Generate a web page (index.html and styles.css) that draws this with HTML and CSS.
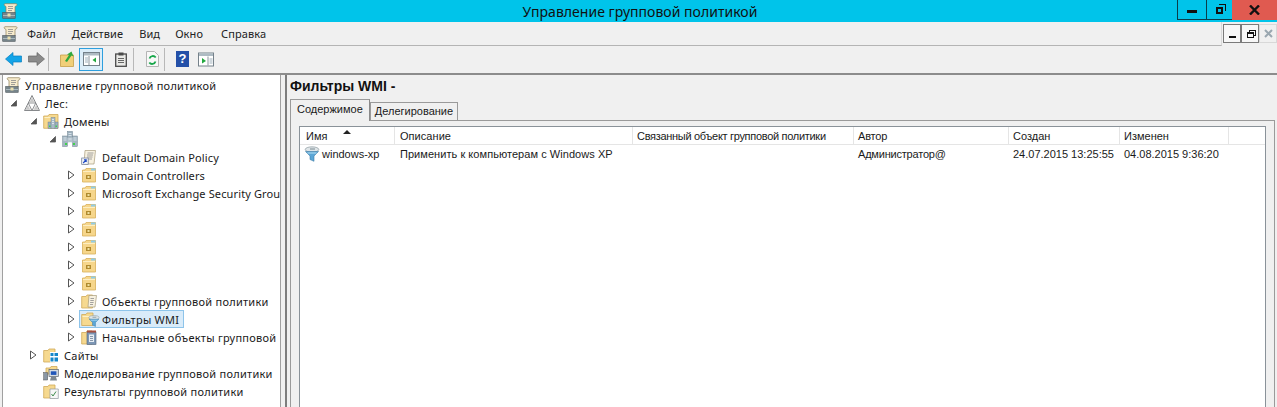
FILE: index.html
```html
<!DOCTYPE html>
<html lang="ru">
<head>
<meta charset="utf-8">
<title>Управление групповой политикой</title>
<link rel="stylesheet" href="styles.css">
</head>
<body>
<svg class="defs" width="0" height="0">
  <defs>
    <symbol id="scroll" viewBox="0 0 16 16">
      <path d="M3 .7h11c1 0 1.500 1.300.5 2l-1.500.8V9c0 1-1 1.500-2 1.500H4V3.500L2.500 2.500C2 1.700 2.300.7 3 .7z" fill="#f6ebcd" stroke="#8f8058" stroke-width=".7"/>
      <path d="M6 3.500h5M6 5.500h5M6 7.500h4" stroke="#8a8a8a" stroke-width=".8"/>
      <rect x=".7" y="9.500" width="12.500" height="5.800" fill="#76848a" stroke="#4b5459" stroke-width=".6"/>
      <rect x="1" y="12" width="12" height="1" fill="#aab8be"/>
      <rect x="5.500" y="10.500" width="3" height="3" fill="#eadfae"/>
    </symbol>
    <symbol id="folder" viewBox="0 0 16 16">
      <path d="M.7 3.500V14.500H12V2H6L5 3.500z" fill="#f6d98f" stroke="#d1aa58" stroke-width=".8"/>
      <path d="M1.500 5h10v1h-10z" fill="#fdf0c6"/>
    </symbol>
    <symbol id="ou" viewBox="0 0 16 16">
      <path d="M1.500 3V15H14.500V1.500H5L4 3z" fill="#f6d68b" stroke="#d8b05a" stroke-width=".8"/>
      <path d="M2 4h12v1H2z" fill="#fdeec2"/>
      <rect x="10" y="1.500" width="4.500" height="2" fill="#8fcdea"/>
      <rect x="5" y="8" width="5" height="4" fill="#b08a2e"/>
      <rect x="6.500" y="9" width="2" height="2" fill="#efe0a0"/>
    </symbol>
    <symbol id="servers" viewBox="0 0 16 16">
      <rect x="5.500" y=".5" width="5" height="6" fill="#9cb0bd" stroke="#718490" stroke-width=".5"/>
      <rect x=".7" y="5" width="4.800" height="10.500" fill="#a4b6c2" stroke="#718490" stroke-width=".5"/>
      <rect x="10.500" y="5" width="4.800" height="10.500" fill="#a4b6c2" stroke="#718490" stroke-width=".5"/>
      <rect x="5.500" y="6.500" width="5" height="5" fill="#b6c5cf"/>
      <rect x="6.500" y="11.500" width="3" height="4" fill="#fff"/>
      <path d="M1.500 7h3M1.500 9h3M11.500 7h3M11.500 9h3M6.500 2.500h3M6.500 4.500h3M6.500 8h3" stroke="#e6eef2" stroke-width=".8"/>
      <rect x="3" y="12" width="2" height="2" fill="#3ed24b"/>
      <rect x="11" y="12" width="2" height="2" fill="#3ed24b"/>
    </symbol>
    <symbol id="forest" viewBox="0 0 16 16">
      <path d="M8 .5L15.500 15.500H.5z" fill="#eeeeee" stroke="#7b7d80" stroke-width=".9"/>
      <path d="M4.300 8h7.400L8 15.500z" fill="#fff" stroke="#7b7d80" stroke-width=".8"/>
      <path d="M8 2.500L5.500 7.500h5zM3.500 10L1.800 14.800h4.500zM12.500 10l1.700 4.800H9.700z" fill="#c9c9c9"/>
    </symbol>
    <symbol id="domains" viewBox="0 0 16 16">
      <path d="M.7 3V15.300H15V1.500H6L5 3z" fill="#f6d98f" stroke="#d1aa58" stroke-width=".8"/>
      <path d="M1.500 4h7v1h-7z" fill="#fdf0c6"/>
      <rect x="5" y="9" width="3.500" height="6.500" fill="#9cb0bd" stroke="#667a85" stroke-width=".4"/>
      <rect x="11.500" y="9" width="3.500" height="6.500" fill="#9cb0bd" stroke="#667a85" stroke-width=".4"/>
      <rect x="8" y="4.500" width="4" height="11" fill="#a9bbc6" stroke="#667a85" stroke-width=".4"/>
      <path d="M9 6.500h2M9 8.500h2M9 10.500h2" stroke="#e8f0f3" stroke-width=".8"/>
      <rect x="6" y="12.500" width="1.500" height="1.500" fill="#3ed24b"/>
      <rect x="12.500" y="12.500" width="1.500" height="1.500" fill="#3ed24b"/>
    </symbol>
    <symbol id="gpo" viewBox="0 0 16 16">
      <path d="M4 1.500h10.500L13 15H3z" fill="#f7f1e0" stroke="#a79b7b" stroke-width=".7"/>
      <path d="M6.500 4h6M6 6h6M6 8h5.500M6 10h5" stroke="#8d8d8d" stroke-width=".8"/>
      <rect x=".7" y="9" width="6.500" height="6.500" fill="#eef1f6" stroke="#707a90" stroke-width=".7"/>
      <path d="M2.200 14L5 11M3 10.800H5.200V13" stroke="#1f49c4" stroke-width="1.100" fill="none"/>
    </symbol>
    <symbol id="gpofolder" viewBox="0 0 16 16">
      <path d="M.7 3.500V15H11.500V2H6L5 3.500z" fill="#f6d98f" stroke="#d1aa58" stroke-width=".8"/>
      <path d="M8 2.500h7.500l-1.500 11.500H7z" fill="#f7f1e0" stroke="#a79b7b" stroke-width=".7"/>
      <path d="M9.500 5.500h3.500M9.300 7.500h3.500M9.100 9.500h3.500M9 11.500h3" stroke="#8d8d8d" stroke-width=".8"/>
    </symbol>
    <symbol id="funnel" viewBox="0 0 16 16">
      <ellipse cx="8" cy="3.500" rx="6.800" ry="2.700" fill="#dfe5e8" stroke="#7a8b92" stroke-width=".6"/>
      <path d="M6 3h5" stroke="#7a8b92"/>
      <path d="M1.500 5.500h13L10 10v5.300L6 13.500V10z" fill="#5ba6d6" stroke="#3f7ea8" stroke-width=".6"/>
      <path d="M3.500 7h9" stroke="#b4def2"/>
    </symbol>
    <symbol id="starter" viewBox="0 0 16 16">
      <path d="M.7 3.500V15H11V2H6L5 3.500z" fill="#f6d98f" stroke="#d1aa58" stroke-width=".8"/>
      <rect x="6" y="3" width="9" height="12.500" fill="#7d97b6" stroke="#4c5f78" stroke-width=".6"/>
      <rect x="6" y="1.500" width="9" height="2" fill="#a85040"/>
      <rect x="8" y="5.500" width="5" height="7.500" fill="#e7edf3"/>
      <path d="M9 7.500h3M9 9.500h3M9 11.500h3" stroke="#5d7088" stroke-width=".7"/>
    </symbol>
    <symbol id="sites" viewBox="0 0 16 16">
      <path d="M.7 3.500V15H12V2H6L5 3.500z" fill="#f6d98f" stroke="#d1aa58" stroke-width=".8"/>
      <rect x="7" y="5" width="8.500" height="10.500" fill="#fff"/>
      <path d="M7.500 6h3v3h-3zM11.500 6h3.500v3h-3.500zM7.500 10.500h3v4h-3zM11.500 10.500h3.500v4h-3.500z" fill="#1586c9"/>
    </symbol>
    <symbol id="model" viewBox="0 0 16 16">
      <path d="M3 3V9H14V1.500H8L7 3z" fill="#f6d98f" stroke="#d1aa58" stroke-width=".8"/>
      <rect x=".7" y="7.500" width="4" height="7.500" fill="#8b98a6" stroke="#555" stroke-width=".5"/>
      <rect x="6" y="4.500" width="9.300" height="7" fill="#d7dde3" stroke="#56606a" stroke-width=".7"/>
      <rect x="7.800" y="6.300" width="5.600" height="3.600" fill="#2156b8"/>
      <path d="M7 15.500h7l-1-3.500H8z" fill="#7d8790"/>
    </symbol>
    <symbol id="results" viewBox="0 0 16 16">
      <path d="M.7 3.500V15H12V2H6L5 3.500z" fill="#f6d98f" stroke="#d1aa58" stroke-width=".8"/>
      <path d="M7 6h8.300v9.500H7z" fill="#f7f7f7" stroke="#8f9aa2" stroke-width=".7"/>
      <path d="M8.500 11l1.500 2 3-4.500" stroke="#3e8c4d" stroke-width="1" fill="none"/>
    </symbol>
    <symbol id="open" viewBox="0 0 9 10"><path d="M1.500 1v8l5.500-4z" fill="#fff" stroke="#555" stroke-width="1"/></symbol>
    <symbol id="expanded" viewBox="0 0 9 10"><path d="M7.500 2.500v5.500H2z" fill="#555" stroke="#555" stroke-width=".8"/></symbol>
  </defs>
</svg>

<div class="app">
  <header class="titlebar">
    <svg class="ico title-ico"><use href="#scroll"/></svg>
    <h1 class="title">Управление групповой политикой</h1>
    <div class="winbtns">
      <span class="winbtn min"><i class="dash"></i></span>
      <span class="winbtn max"><i class="restore"></i></span>
      <span class="winbtn close">
        <svg width="11" height="10" viewBox="0 0 11 10"><path d="M1 .5L10 9.500M10 .5L1 9.500" stroke="#111" stroke-width="2.400"/></svg>
      </span>
    </div>
  </header>

  <nav class="menubar">
    <div class="menuleft">
      <svg class="ico menu-ico"><use href="#scroll"/></svg>
      <span class="menuitem m1">Файл</span>
      <span class="menuitem m2">Действие</span>
      <span class="menuitem m3">Вид</span>
      <span class="menuitem m4">Окно</span>
      <span class="menuitem m5">Справка</span>
    </div>
    <div class="mdibtns">
      <span class="mdibtn"><i class="mdi-dash"></i></span>
      <span class="mdibtn"><i class="mdi-restore"></i></span>
      <span class="mdibtn off">
        <svg width="9" height="9" viewBox="0 0 9 9"><path d="M1 1l7 7M8 1L1 8" stroke="#9aa7b0" stroke-width="2"/></svg>
      </span>
    </div>
  </nav>

  <div class="toolbar">
    <svg class="tool arrow" width="17" height="14" viewBox="0 0 17 14"><path d="M8 .5V4h8.500v6H8v3.500L.5 7z" fill="#13a4e8" stroke="#0a7fbe" stroke-width=".7"/></svg>
    <svg class="tool arrow a2" width="17" height="14" viewBox="0 0 17 14"><path d="M9 .5V4H.5v6H9v3.500L16.500 7z" fill="#8b8b8b" stroke="#666" stroke-width=".7"/></svg>
    <i class="sep s1"></i>
    <svg class="tool up" width="15" height="16" viewBox="0 0 15 16"><path d="M.5 4V15.500H13.500V4z" fill="#f1cf78" stroke="#c79f48" stroke-width=".8"/><path d="M5 10L9 4 7 3.500 11.500.5l2 5-2-1L7 11z" fill="#2fa83c"/></svg>
    <span class="activebtn"><svg width="17" height="16" viewBox="0 0 17 16"><rect x=".5" y="1.500" width="16" height="13" fill="#fff" stroke="#75818a"/><rect x="1" y="2" width="15" height="2.500" fill="#aebbc3"/><path d="M6 5v9" stroke="#8a949c"/><path d="M2 7h3M2 9h3M2 11h3" stroke="#9fb0bb"/><path d="M13 6.500v5L9.500 9z" fill="#22a83e"/></svg></span>
    <svg class="tool clip" width="12" height="15" viewBox="0 0 12 15"><rect x=".7" y="2" width="10.600" height="12.300" fill="#e9e9e6" stroke="#4a4a4a" stroke-width="1.300"/><rect x="3.500" y=".5" width="5" height="3" fill="#4a4a4a"/><path d="M3 6.500h6M3 8.500h6M3 10.500h6" stroke="#666"/></svg>
    <i class="sep s2"></i>
    <svg class="tool refresh" width="13" height="16" viewBox="0 0 13 16"><path d="M.5.5h8l4 4v11H.5z" fill="#f8f8f8" stroke="#b4b4b4"/><path d="M3.500 7.500a3.500 3.500 0 0 1 6.200-1M9.500 10.500a3.500 3.500 0 0 1-6.200 1" stroke="#18a64a" stroke-width="1.800" fill="none"/></svg>
    <i class="sep s3"></i>
    <span class="help">?</span>
    <svg class="tool pane2" width="16" height="15" viewBox="0 0 16 15"><rect x=".5" y="1" width="15" height="13" fill="#fff" stroke="#75818a"/><rect x="1" y="1.500" width="14" height="2.500" fill="#aebbc3"/><path d="M10 4.500v9" stroke="#8a949c"/><path d="M11.500 7h3M11.500 9h3M11.500 11h3" stroke="#9fb0bb"/><path d="M4 6v5.500L8 9z" fill="#22a83e"/></svg>
  </div>

  <main class="panes">
    <aside class="tree">
      <div class="row l0"><svg class="ico"><use href="#scroll"/></svg><span class="lbl">Управление групповой политикой</span></div>
      <div class="row l1"><svg class="tw"><use href="#expanded"/></svg><svg class="ico"><use href="#forest"/></svg><span class="lbl">Лес:</span></div>
      <div class="row l2"><svg class="tw"><use href="#expanded"/></svg><svg class="ico"><use href="#domains"/></svg><span class="lbl">Домены</span></div>
      <div class="row l3"><svg class="tw"><use href="#expanded"/></svg><svg class="ico"><use href="#servers"/></svg></div>
      <div class="row l4"><span class="tw"></span><svg class="ico"><use href="#gpo"/></svg><span class="lbl lat">Default Domain Policy</span></div>
      <div class="row l4"><svg class="tw"><use href="#open"/></svg><svg class="ico"><use href="#ou"/></svg><span class="lbl lat">Domain Controllers</span></div>
      <div class="row l4"><svg class="tw"><use href="#open"/></svg><svg class="ico"><use href="#ou"/></svg><span class="lbl lat">Microsoft Exchange Security Grou</span></div>
      <div class="row l4"><svg class="tw"><use href="#open"/></svg><svg class="ico"><use href="#ou"/></svg></div>
      <div class="row l4"><svg class="tw"><use href="#open"/></svg><svg class="ico"><use href="#ou"/></svg></div>
      <div class="row l4"><svg class="tw"><use href="#open"/></svg><svg class="ico"><use href="#ou"/></svg></div>
      <div class="row l4"><svg class="tw"><use href="#open"/></svg><svg class="ico"><use href="#ou"/></svg></div>
      <div class="row l4"><svg class="tw"><use href="#open"/></svg><svg class="ico"><use href="#ou"/></svg></div>
      <div class="row l4"><svg class="tw"><use href="#open"/></svg><svg class="ico"><use href="#gpofolder"/></svg><span class="lbl">Объекты групповой политики</span></div>
      <div class="row l4"><svg class="tw"><use href="#open"/></svg><span class="selbox"><svg class="ico"><use href="#folder"/></svg><svg class="ico funnel-over"><use href="#funnel"/></svg><span class="lbl">Фильтры WMI</span></span></div>
      <div class="row l4"><svg class="tw"><use href="#open"/></svg><svg class="ico"><use href="#starter"/></svg><span class="lbl">Начальные объекты групповой</span></div>
      <div class="row l2"><svg class="tw"><use href="#open"/></svg><svg class="ico"><use href="#sites"/></svg><span class="lbl">Сайты</span></div>
      <div class="row l2"><span class="tw"></span><svg class="ico"><use href="#model"/></svg><span class="lbl">Моделирование групповой политики</span></div>
      <div class="row l2"><span class="tw"></span><svg class="ico"><use href="#results"/></svg><span class="lbl">Результаты групповой политики</span></div>
    </aside>

    <section class="content">
      <h2 class="heading">Фильтры WMI -</h2>
      <div class="tabs">
        <span class="tab active">Содержимое</span>
        <span class="tab">Делегирование</span>
      </div>
      <div class="tabpanel">
        <div class="list">
          <div class="lhead">
            <span class="c c1">Имя<svg class="sort" width="8" height="4" viewBox="0 0 8 4"><path d="M4 0L8 4H0z" fill="#222"/></svg></span>
            <span class="c c2">Описание</span>
            <span class="c c3">Связанный объект групповой политики</span>
            <span class="c c4">Автор</span>
            <span class="c c5">Создан</span>
            <span class="c c6">Изменен</span>
            <span class="c c7"></span>
          </div>
          <div class="lrow">
            <span class="c c1"><svg class="ico"><use href="#funnel"/></svg>windows-xp</span>
            <span class="c c2">Применить к компьютерам с Windows XP</span>
            <span class="c c3"></span>
            <span class="c c4">Администратор@</span>
            <span class="c c5">24.07.2015 13:25:55</span>
            <span class="c c6">04.08.2015 9:36:20</span>
          </div>
        </div>
      </div>
    </section>
  </main>
</div>
</body>
</html>
```

FILE: styles.css
```css
* { box-sizing: border-box; }
html, body { margin: 0; height: 100%; overflow: hidden; }
body {
  background: #f0f0f0;
  color: #1a1a1a;
  font-family: "Noto Sans", "Open Sans", sans-serif;
  font-size: 11px;
}
.defs { position: absolute; }
.app { display: flex; flex-direction: column; width: 1277px; height: 407px; }
.ico { width: 16px; height: 16px; flex: none; display: block; }

.titlebar {
  height: 22px;
  flex: none;
  background: #00c4ea;
  display: flex;
  align-items: flex-start;
  position: relative;
}
.title-ico { margin: 3px 0 0 2px; }
.title {
  position: absolute;
  left: 0; right: 0; top: 1px;
  margin: 0;
  text-align: center;
  font-weight: 400;
  font-size: 14px;
  line-height: 22px;
  letter-spacing: .03px;
  color: #111;
  padding-left: 3px;
}
.winbtns { margin-left: auto; display: flex; height: 20px; }
.winbtn { display: flex; align-items: center; justify-content: center; height: 20px; }
.winbtn.min { width: 29px; border: 1px solid #0a3d4a; border-top: 0; border-right: 0; }
.winbtn.max { width: 26px; border: 1px solid #0a3d4a; border-top: 0; border-right: 0; }
.winbtn.close { width: 45px; background: #e05a50; }
.dash { display: block; width: 10px; height: 3px; background: #111; margin-top: 4px; }
.restore { display: block; width: 7px; height: 7px; border: 2px solid #111; margin-top: 1px; box-shadow: 2px -2px 0 0 #00c4ea, 3px -3px 0 0 #111; }

.menubar {
  height: 24px;
  flex: none;
  display: flex;
  justify-content: space-between;
}
.menuleft {
  flex: 1;
  display: flex;
  align-items: center;
  border-bottom: 1px solid #b4b4b4;
  border-right: 1px solid #d8d8d8;
  padding-left: 2px;
}
.menuitem { letter-spacing: .1px; color: #222; }
.m1 { margin-left: 9px; }
.m2 { margin-left: 16px; }
.m3 { margin-left: 16px; }
.m4 { margin-left: 15px; }
.m5 { margin-left: 18px; }
.mdibtns { display: flex; width: 55px; padding: 2px 0 0 1px; }
.mdibtn {
  width: 19px;
  height: 19px;
  border: 1px solid #7a7a7a;
  background: #f7f7f7;
  display: flex;
  align-items: center;
  justify-content: center;
}
.mdibtn.off { border: 1px solid #d8d8d8; background: #f0f0f0; }
.mdi-dash { display: block; width: 7px; height: 2px; background: #111; margin-top: 7px; }
.mdi-restore { display: block; width: 7px; height: 6px; border: 1px solid #111; border-top-width: 2px; margin-top: 2px; box-shadow: 2px -2px 0 -1px #f7f7f7, 2px -2px 0 0 #111; }

.toolbar {
  height: 29px;
  flex: none;
  display: flex;
  align-items: center;
  border-bottom: 2px solid #8c8c8c;
  padding-left: 5px;
  padding-bottom: 1px;
}
.tool { flex: none; display: block; }
.a2 { margin-left: 6px; }
.sep { display: block; width: 1px; height: 23px; background: #b8b8b8; flex: none; }
.s1 { margin-left: 3px; }
.up { margin-left: 11px; }
.activebtn {
  width: 24px; height: 23px; margin-left: 4px;
  display: flex; align-items: center; justify-content: center;
  background: #dcedf8;
  border: 1px solid #2e9fde;
  flex: none;
}
.clip { margin-left: 12px; }
.s2 { margin-left: 6px; }
.refresh { margin-left: 12px; }
.s3 { margin-left: 5px; }
.help {
  width: 13px; height: 16px; margin-left: 11px;
  background: #2450a8;
  color: #fff;
  font: 700 13px/16px "Liberation Sans", sans-serif;
  text-align: center;
  flex: none;
}
.pane2 { margin-left: 9px; }

.panes { flex: 1; display: flex; min-height: 0; padding-left: 2px; }
.tree {
  width: 279px;
  flex: none;
  background: #fff;
  border-left: 1px solid #a0a0a0;
  border-right: 1px solid #a0a0a0;
  overflow: hidden;
  padding-top: 1px;
}
.row { display: flex; align-items: center; height: 18px; white-space: nowrap; }
.l0 { padding-left: 2px; }
.l1 { padding-left: 6px; }
.l2 { padding-left: 26px; }
.l3 { padding-left: 45px; }
.l4 { padding-left: 64px; }
.tw { width: 9px; height: 10px; flex: none; display: block; margin-right: 5px; }
.l1 .tw { margin-right: 6px; }
.lbl { margin-left: 4px; padding: 0 1px; letter-spacing: .25px; }
.l0 .lbl { margin-left: 3px; }
.lat { letter-spacing: .13px; padding-right: 0; }
.selbox {
  display: flex;
  align-items: center;
  height: 18px;
  margin-left: -2px;
  padding: 0 3px 0 1px;
  background: #d9ebf9;
  border: 1px solid #8ec4ea;
  position: relative;
}
.funnel-over { position: absolute; left: 8px; top: 4px; width: 12px; height: 12px; }

.content {
  flex: 1;
  min-width: 0;
  margin-left: 4px;
  border-left: 2px solid #7d7d7d;
  padding-left: 3px;
  display: flex;
  flex-direction: column;
}
.heading { margin: 0; padding: 3px 0 0 0; font-size: 14px; line-height: 17px; font-weight: 700; color: #111; font-family: "Liberation Sans", sans-serif; height: 22px; }
.tabs { display: flex; align-items: flex-end; height: 23px; flex: none; position: relative; z-index: 1; }
.tab {
  height: 18px; line-height: 16px;
  padding: 0 4px;
  border: 1px solid #9a9a9a;
  border-bottom: 0;
  background: #f0f0f0;
  font-family: "Liberation Sans", sans-serif;
}
.tab.active { height: 22px; padding: 0 6px; line-height: 18px; margin-bottom: -1px; border-right-color: #8a8a8a; }
.tabpanel {
  flex: 1;
  border: 1px solid #9a9a9a;
  border-bottom: 0;
  margin-right: 2px;
  padding: 5px 8px 0 8px;
  min-height: 0;
}
.list { height: 100%; background: #fff; border: 1px solid #8a9299; border-bottom: 0; font-family: "Liberation Sans", sans-serif; }
.lhead { display: flex; height: 18px; border-bottom: 1px solid #e5e5e5; }
.lhead .c { border-right: 1px solid #e5e5e5; position: relative; padding-top: 1px; }
.lrow { display: flex; height: 18px; align-items: center; }
.c { display: flex; align-items: center; padding-left: 4px; white-space: nowrap; flex: none; overflow: hidden; }
.c1 { width: 95px; padding-left: 6px; }
.c2 { width: 238px; padding-left: 5px; letter-spacing: .05px; }
.c3 { width: 221px; letter-spacing: -.3px; }
.c4 { width: 155px; letter-spacing: -.2px; }
.c5 { width: 111px; }
.c6 { width: 109px; }
.c7 { flex: 1; }
.lhead .c7 { border-right: 0; }
.lrow .c1 { padding-left: 4px; gap: 2px; }
.sort { position: absolute; left: 43px; top: 3px; }
```
